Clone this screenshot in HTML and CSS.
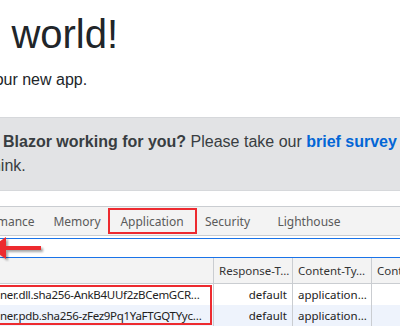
FILE: index.html
```html
<!DOCTYPE html>
<html lang="en">
<head>
    <meta charset="UTF-8">
    <meta name="viewport" content="width=device-width, initial-scale=1.0">
    <title>Hello, world!</title>
    <link rel="stylesheet" href="styles.css">
</head>
<body>
    <main class="page">
        <h1>Hello, world!</h1>
        <p>Welcome to your new app.</p>

        <!-- survey prompt -->
        <div class="alert" role="alert">
            <span class="pencil" aria-hidden="true"></span><strong>How is Blazor working for you?</strong>
            <span class="nowrap">Please take our <a href="#">brief survey</a></span>
            and tell us what you think.
        </div>
    </main>

    <section class="devtools">
        <nav class="tabs">
            <span class="tab tab-perf">Performance</span>
            <span class="tab tab-memory">Memory</span>
            <span class="tab tab-app">Application</span>
            <span class="tab tab-security">Security</span>
            <span class="tab tab-lighthouse">Lighthouse</span>
        </nav>

        <div class="filter-bar">
            <div class="filter-input"></div>
        </div>

        <div class="grid">
            <div class="cell head"></div>
            <div class="cell head">Response-T…</div>
            <div class="cell head">Content-Ty…</div>
            <div class="cell head">Cont</div>

            <div class="cell name">ner.dll.sha256-AnkB4UUf2zBCemGCR…</div>
            <div class="cell num">default</div>
            <div class="cell">application…</div>
            <div class="cell"></div>

            <div class="cell name alt">ner.pdb.sha256-zFez9Pq1YaFTGQTYyc…</div>
            <div class="cell num alt">default</div>
            <div class="cell alt">application…</div>
            <div class="cell alt"></div>
        </div>

        <!-- red annotations drawn over the screenshot -->
        <div class="mark mark-tab"></div>
        <div class="mark mark-rows"></div>
        <svg class="arrow" width="48" height="26" viewBox="0 0 48 26">
            <defs>
                <filter id="shadow" x="-20%" y="-40%" width="150%" height="200%">
                    <feDropShadow dx="2" dy="2" stdDeviation="1.2" flood-color="#000" flood-opacity="0.35"/>
                </filter>
            </defs>
            <g filter="url(#shadow)" fill="#ed2a2f">
                <rect x="4" y="10" width="37" height="4"/>
                <polygon points="-10,12 6,1 6,23"/>
            </g>
        </svg>
    </section>
</body>
</html>
```

FILE: styles.css
```css
body {
    margin: 0;
    width: 400px;
    height: 326px;
    overflow: hidden;
    position: relative;
    background: #fff;
    font-family: "Liberation Sans", Arial, sans-serif;
    color: #212529;
}

.page {
    width: 617px;
    margin-left: -102px;
    padding-top: 10px;
}

h1 {
    margin: 0 0 10px;
    font-size: 40px;
    font-weight: normal;
    line-height: 48px;
}

p {
    margin: 0;
    font-size: 16px;
    line-height: 24px;
}

.alert {
    margin-top: 25px;
    padding: 12px 20px;
    border: 1px solid #d6d8db;
    border-radius: 4px;
    background-color: #e2e3e5;
    color: #383d41;
    font-size: 16px;
    line-height: 24px;
}

.pencil {
    display: inline-block;
    width: 20px;
    margin-right: 8px;
}

.nowrap {
    white-space: nowrap;
}

.alert a {
    color: #0366d6;
    font-weight: bold;
    text-decoration: none;
}

/* devtools */
.devtools {
    margin-top: 15px;
    font-family: "Noto Sans", sans-serif;
    font-size: 12px;
    color: #222;
}

.tabs {
    display: flex;
    height: 28px;
    margin-left: -50px;
    align-items: center;
    background-color: #f3f3f3;
    border-top: 1px solid #cacdd1;
    border-bottom: 1px solid #cacdd1;
    color: #5a5a5a;
    white-space: nowrap;
}

.tab {
    text-align: center;
}

.tab-perf { width: 96px; }
.tab-memory { width: 62px; }
.tab-app { width: 88px; }
.tab-security { width: 63px; }
.tab-lighthouse { width: 100px; }

.filter-bar {
    padding-top: 2px;
}

.filter-input {
    height: 18px;
    margin-left: -10px;
    width: 500px;
    border-top: 1px solid #1a73e8;
    border-bottom: 1px solid #1a73e8;
}

.grid {
    display: grid;
    grid-template-columns: 213px 79px 79px 1fr;
    font-size: 11.5px;
}

.cell {
    height: 21px;
    line-height: 21px;
    padding: 0 5px;
    border-left: 1px solid #cacdd1;
    white-space: nowrap;
    overflow: hidden;
}

.cell.name {
    padding: 0;
    border-left: none;
    letter-spacing: -0.3px;
}

.cell.head {
    height: 25px;
    line-height: 25px;
    background-color: #f3f3f3;
    border-bottom: 1px solid #cacdd1;
    color: #333;
}

.cell.head:first-child {
    border-left: none;
}

.cell.num {
    text-align: right;
}

.cell.alt {
    background-color: #eef3fc;
}

.mark {
    position: absolute;
    box-sizing: border-box;
    border: 2px solid #ed2a2f;
}

.mark-tab {
    left: 108px;
    top: 208px;
    width: 89px;
    height: 26px;
}

.mark-rows {
    left: -10px;
    top: 285px;
    width: 222px;
    height: 40px;
}

.arrow {
    position: absolute;
    left: 0;
    top: 236px;
}
```
